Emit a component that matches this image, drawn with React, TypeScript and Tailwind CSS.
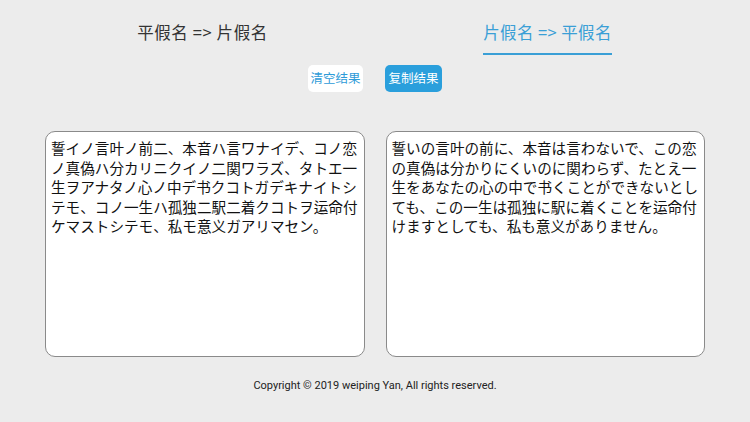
import React from 'react';

const katakanaLines = [
    '誓イノ言叶ノ前二、本音ハ言ワナイデ、コノ恋',
    'ノ真偽ハ分カリニクイノ二関ワラズ、タトエ一',
    '生ヲアナタノ心ノ中デ书クコトガデキナイトシ',
    'テモ、コノ一生ハ孤独二駅二着クコトヲ运命付',
    'ケマストシテモ、私モ意义ガアリマセン。',
];

const hiraganaLines = [
    '誓いの言叶の前に、本音は言わないで、この恋',
    'の真偽は分かりにくいのに関わらず、たとえ一',
    '生をあなたの心の中で书くことができないとし',
    'ても、この一生は孤独に駅に着くことを运命付',
    'けますとしても、私も意义がありません。',
];

const TextBox = ({ lines }: { lines: string[] }) => (
    <div className="flex-1 h-[226px] bg-white border border-[#8a8a8a] rounded-[10px] pt-[6px] pl-[5px] text-[14.6px] leading-[19.5px] text-[#111] font-['Noto_Sans_CJK_JP',sans-serif] whitespace-nowrap overflow-hidden">
        {lines.map((line) => (
            <div key={line}>{line}</div>
        ))}
    </div>
);

const App = () => {
    return (
        <div className="w-[750px] h-[422px] bg-[#ececec] flex flex-col font-['Noto_Sans_CJK_SC',sans-serif]">
            {/* Tabs */}
            <div className="flex px-[30px] pt-[20px]">
                <div className="flex-1 flex justify-center">
                    <span className="text-[16.5px] leading-[24px] text-[#333] tracking-[0.6px] whitespace-nowrap">平假名 =&gt; 片假名</span>
                </div>
                <div className="flex-1 flex justify-center">
                    <div className="flex flex-col">
                        <span className="text-[16.5px] leading-[24px] text-[#3a9fd6] tracking-[0.4px] whitespace-nowrap">片假名 =&gt; 平假名</span>
                        <div className="h-[2px] bg-[#3a9fd6] mt-[9px]" />
                    </div>
                </div>
            </div>

            {/* Buttons */}
            <div className="flex justify-center gap-[22px] mt-[10px]">
                <button className="h-[27px] w-[55px] bg-white text-[#2e9bd8] text-[12.5px] rounded-[5px] whitespace-nowrap">清空结果</button>
                <button className="h-[27px] w-[57px] bg-[#2a9fdc] text-white text-[12.5px] rounded-[5px] whitespace-nowrap">复制结果</button>
            </div>

            {/* Text areas */}
            <div className="flex gap-[21px] px-[45px] mt-[39px]">
                <TextBox lines={katakanaLines} />
                <TextBox lines={hiraganaLines} />
            </div>

            {/* Footer */}
            <div className="mt-[21px] text-center text-[11px] text-[#222] font-['Roboto',sans-serif]">
                Copyright © 2019 weiping Yan, All rights reserved.
            </div>
        </div>
    );
};

export default App;
